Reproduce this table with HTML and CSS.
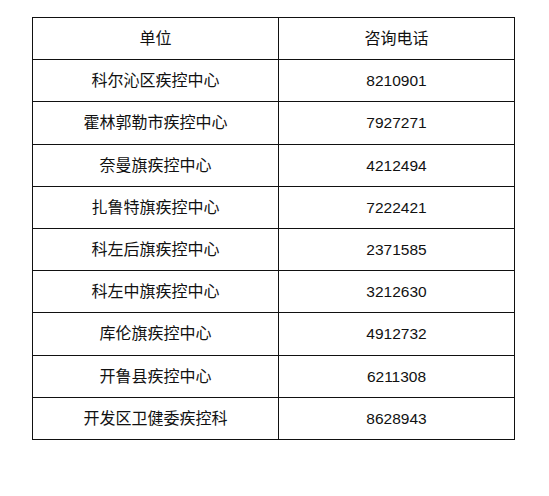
FILE: index.html
```html
<!DOCTYPE html>
<html lang="zh">
<head>
<meta charset="utf-8">
<link rel="stylesheet" href="styles.css">
</head>
<body>
<table class="contacts">
  <tr><td class="unit">单位</td><td class="phone cn">咨询电话</td></tr>
  <tr><td class="unit">科尔沁区疾控中心</td><td class="phone">8210901</td></tr>
  <tr><td class="unit">霍林郭勒市疾控中心</td><td class="phone">7927271</td></tr>
  <tr><td class="unit">奈曼旗疾控中心</td><td class="phone">4212494</td></tr>
  <tr><td class="unit">扎鲁特旗疾控中心</td><td class="phone">7222421</td></tr>
  <tr><td class="unit">科左后旗疾控中心</td><td class="phone">2371585</td></tr>
  <tr><td class="unit">科左中旗疾控中心</td><td class="phone">3212630</td></tr>
  <tr><td class="unit">库伦旗疾控中心</td><td class="phone">4912732</td></tr>
  <tr><td class="unit">开鲁县疾控中心</td><td class="phone">6211308</td></tr>
  <tr><td class="unit">开发区卫健委疾控科</td><td class="phone">8628943</td></tr>
</table>
</body>
</html>
```
FILE: styles.css
```css
html, body {
  margin: 0;
  padding: 0;
  background: #fff;
}
body {
  padding: 17px 0 0 32px;
  font-family: "Liberation Sans", "Noto Sans CJK SC", sans-serif;
  color: #111;
}
.contacts {
  border-collapse: collapse;
  width: 483px;
  table-layout: fixed;
}
.contacts tr {
  height: 42.2px;
}
.contacts td {
  border: 1px solid #111;
  text-align: center;
  vertical-align: middle;
  padding: 1px 0 0;
  line-height: 20px;
}
.unit {
  width: 245px;
  font-size: 16px;
}
.phone {
  font-size: 15.5px;
}
.phone.cn {
  font-size: 16px;
}
```
